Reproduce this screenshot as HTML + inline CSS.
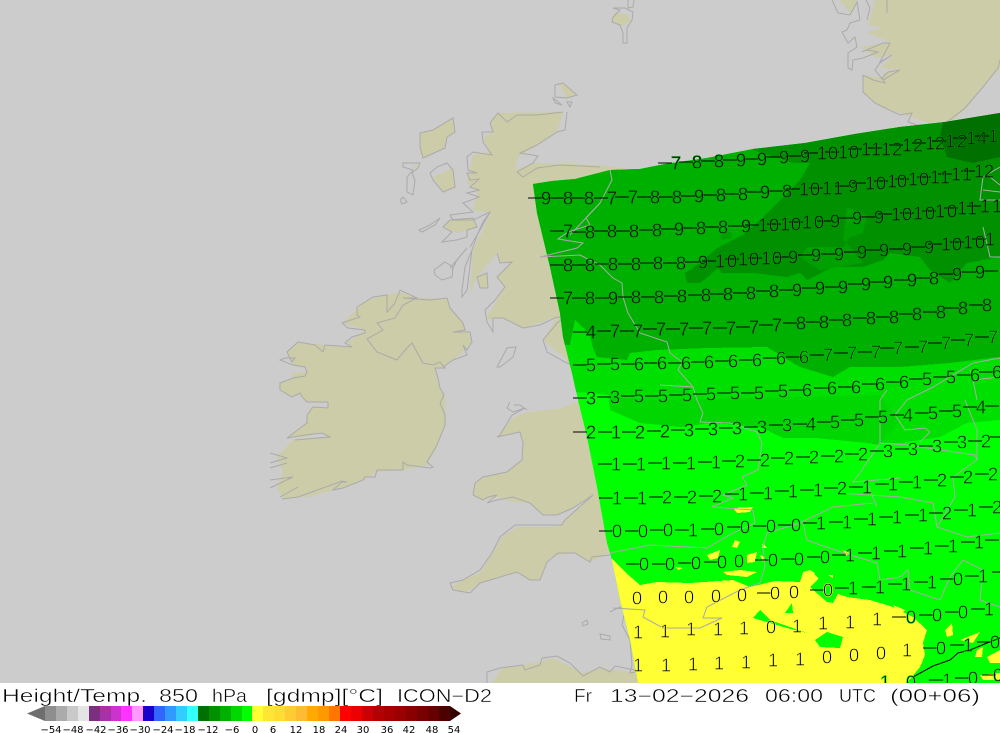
<!DOCTYPE html>
<html><head><meta charset="utf-8"><title>Height/Temp. 850 hPa ICON-D2</title>
<style>html,body{margin:0;padding:0;background:#fff;width:1000px;height:733px;overflow:hidden}svg{display:block}</style></head>
<body>
<svg xmlns="http://www.w3.org/2000/svg" width="1000" height="733" viewBox="0 0 1000 733">
<defs>
<clipPath id="map"><rect x="0" y="0" width="1000" height="683"/></clipPath>
<clipPath id="model"><polygon points="533,184 552,181 575,179 610,170 640,169 665,164 707,158 753,149 805,143 855,134 900,127 945,122 1000,113 1000,683 638,683 630,640 620,600 612,560 607,543 597,487 587,437 578,400 572,373 563,337 560,313 550,267 537,213"/></clipPath>
</defs>
<g clip-path="url(#map)">
<rect width="1000" height="683" fill="#cccccc"/>
<!-- land fill -->
<g fill="#cdcca8" shape-rendering="crispEdges">
<polygon points="497,113 563,112 558,130 537,145 518,157 515,170 533,163 600,165 640,170 640,400 572,373 567,360 543,340 557,317 523,328 503,318 485,320 505,287 497,277 512,262 500,263 497,253 477,277 470,293 473,250 483,230 490,213 473,210 478,190 467,183 473,155 490,152 483,138 493,132 490,123"/>
<polygon points="513,418 527,412 563,408 580,400 640,400 640,553 610,553 590,562 573,553 550,557 540,580 530,580 517,572 480,583 467,592 450,588 463,580 480,573 493,553 502,537 517,527 557,527 565,520 593,495 573,508 557,515 543,515 530,503 513,502 497,497 483,500 473,495 475,483 483,477 507,472 522,460 523,443 520,432 497,437"/>
<polygon points="367,300 400,292 417,298 447,298 450,308 463,323 472,342 463,352 453,360 443,367 435,370 440,388 445,397 446,423 437,447 427,465 403,470 377,472 363,480 343,488 307,497 283,498 277,487 283,473 277,457 293,440 320,438 328,437 320,432 305,437 287,438 307,423 307,413 313,407 328,408 328,402 307,402 300,395 292,397 280,390 280,383 293,378 292,373 305,372 307,367 293,365 287,352 298,342 325,345 352,347 347,343 365,330 342,323"/>
<polygon points="840,0 1000,0 1000,68 983,87 965,110 953,120 928,123 907,115 883,108 863,93 863,75 883,78 883,73 900,70 880,68 893,55 877,58 860,47 890,42 867,33 883,27 868,25 875,0 857,0 850,13"/>
<polygon points="420,133 433,130 453,118 455,132 447,137 445,148 423,158 420,147"/>
<polygon points="433,177 453,168 456,187 443,192"/>
<polygon points="443,227 450,220 473,218 477,227 467,230 457,233"/>
<polygon points="477,277 487,273 488,288 480,288"/>
<polygon points="560,85 563,83 577,95 567,98"/>
<polygon points="615,12 628,15 631,22 622,26 613,22"/>
<polygon points="412,168 420,163 418,168"/>
<polygon points="492,683 503,667 523,665 540,662 553,658 583,673 600,668 637,673 645,683"/>
</g>
<!-- coast on sea -->
<g fill="none" stroke="#aaaaaa" stroke-width="1">
<path d="M567,112L565,130L557,132L537,145L520,153L538,156L533,163L517,172L523,177L537,168L560,165L600,167"/>
<path d="M563,112L537,115L517,115L507,122L498,113L490,123L493,132L482,132L483,142L492,155L473,152L467,157L468,170L477,173L467,173L470,180L479,179L470,187L479,190L467,193L479,197L463,203L473,212L450,215L453,220L473,220L490,212L480,230L470,247"/>
<path d="M490,212L483,222L478,233L472,250L467,290L462,297L462,290L465,267L472,250"/>
<path d="M497,253L500,263L512,262L497,277L505,287L495,300L485,310L487,322L493,332L493,318L503,318L523,328L540,325L557,317L565,318L558,322L543,340L547,352L565,362L572,365"/>
<path d="M430,173L437,167L447,163L453,170L455,187L443,192L433,180Z"/>
<path d="M420,133L433,130L453,118L455,132L447,137L445,148L423,158L420,147Z"/>
<path d="M403,163L420,163L418,168L412,173L415,180L413,195L407,192L407,177L413,170L403,167Z"/>
<path d="M400,200L403,197L407,202L402,204Z"/>
<path d="M443,227L450,220L473,218L477,227L467,230L467,237L457,240L442,242L447,237L452,232Z"/>
<path d="M419,230L430,225L440,218L435,225L422,232Z"/>
<path d="M434,270L445,262L453,267L452,277L442,280L435,275Z"/>
<path d="M450,268L467,248L457,260L452,270"/>
<path d="M477,277L487,273L488,288L480,288Z"/>
<path d="M555,85L563,83L577,95L567,98L555,97Z"/>
<path d="M553,98L562,105L555,103Z"/>
<path d="M567,102L572,102L570,107Z"/>
<path d="M497,367L507,348L516,347L513,357L500,367Z"/>
<path d="M613,8L625,8L633,12L632,20L627,28L627,43L623,43L623,33L620,25L612,22L613,17L620,10Z"/>
<path d="M628,0L628,8L633,7L634,0"/>
<path d="M832,0L838,13L850,15L857,2L860,20L850,23L847,30L842,32L848,43L855,37L857,47L848,53L848,68L852,70L853,60L863,58L878,52L867,50L862,52L883,43L890,43L880,62L892,55L880,63L875,70L883,80L900,70L888,72L882,78L885,83L873,80L863,75L863,92L875,103L885,108L900,115L912,113L908,122L923,127L947,122L965,108L983,87L998,68L1000,60"/>
<path d="M866,0L870,8L867,20"/><path d="M887,0L887,13"/>
<!-- Ireland -->
<path d="M357,307L373,297L387,295L387,312L395,303L400,290L417,298L403,305L395,318L377,323L383,330L367,339L377,352L397,360L405,350L412,343L423,363L433,365L440,362L445,368L435,368L438,378L440,388L444,395L440,403L445,415L445,425L437,445L427,462L433,467L430,468L407,465L403,462L403,470L377,470L375,477L365,477L363,480L343,488L333,490L342,482L347,482L342,481L298,497L282,499"/>
<path d="M417,298L403,298L430,300L447,298L450,308L463,323L465,330L453,332L470,332L472,342L467,350L463,345L467,355L453,360L443,367"/>
<path d="M357,307L357,315L360,317L342,323L348,328L365,330L365,333L352,337L345,343L352,347L325,345L323,352L315,345L298,342L287,352L292,362L295,358L285,358L280,360L293,365L305,367L307,372L305,376L293,378L280,383L280,390L292,397L300,393L303,398L307,402L328,402L328,408L313,407L307,415L307,423L287,438L305,435L322,433L330,437L318,438L295,440"/>
<path d="M270,453L287,458L270,463M270,468L287,463M270,480L293,477L270,488M280,497L298,487"/>
<!-- Wales / England SW -->
<path d="M510,402L507,408L513,412L525,408L512,415L500,435L497,437L520,432L523,443L522,460L507,472L483,477L475,483L473,495L483,500L488,497L497,495L487,503L497,500L513,497L530,503L543,515L557,515L573,508L593,495L565,520L562,525L515,525L500,537L492,553L480,570L463,580L450,583L453,590L470,593L480,583L517,572L530,580L540,580L547,562L558,553L575,553L590,562L592,557L610,555"/>
<path d="M514,405L520,405L527,410"/>
<path d="M610,612L620,607L635,610"/><path d="M625,610L622,625L630,640L632,665L630,673L635,672"/>
<path d="M582,623L587,620L588,624L583,626Z"/><path d="M600,634L610,636L610,640L601,639Z"/>
<path d="M487,683L487,672L500,668L523,665L525,670L540,665L542,658L557,656L570,663L583,676L600,667L610,672L615,666L635,670"/>
</g>
<!-- model field -->
<g clip-path="url(#model)" shape-rendering="crispEdges">
<rect x="500" y="100" width="500" height="590" fill="#00ff00"/>
<polygon fill="#ffff33" points="600,550 612,559 625,572 640,585 657,582 690,583 733,580 750,587 775,581 800,582 803,572 810,570 818,578 827,590 847,597 870,600 893,607 913,617 927,630 923,643 925,655 920,667 907,683 600,690"/>
<g fill="#ffff33">
<polygon points="733,508 753,507 750,512 737,513"/>
<polygon points="707,555 720,550 718,558 710,560"/>
<polygon points="735,540 740,542 737,548 732,547"/>
<polygon points="747,555 757,552 755,562 747,563"/>
<polygon points="723,572 740,570 757,572 747,577 727,575"/>
<polygon points="760,555 765,557 763,562"/>
<polygon points="763,543 767,548 762,548"/>
<polygon points="675,567 683,568 678,570"/>
<polygon points="810,570 815,573 812,577"/>
<polygon points="828,575 833,575 833,578"/>
<polygon points="893,605 905,610 900,615"/>
<polygon points="945,630 952,623 953,635 947,637"/>
<polygon points="960,640 980,632 973,643"/>
<polygon points="977,650 983,647 982,657 975,657"/>
<polygon points="987,657 1000,650 1000,663 990,663"/>
<polygon points="980,675 1000,673 1000,680 983,680"/>
<polygon points="843,550 850,553 846,556"/>
</g>
<g fill="#00ff00">
<polygon points="753,618 760,610 770,620 807,633 787,628 770,623"/>
<polygon points="785,613 792,603 793,613"/>
<polygon points="815,640 827,632 843,637 840,648 820,647"/>
<polygon points="810,587 820,577 840,590 833,603 827,602"/>
</g>
<polygon fill="#00e000" points="500,100 1000,100 1000,420 967,423 940,437 900,443 867,443 816,438 783,438 760,427 713,423 680,427 640,423 610,410 608,395 590,393 573,392 500,392"/>
<polygon fill="#00d600" points="610,397 650,400 750,398 880,395 900,420 880,445 867,443 816,438 783,438 760,427 713,423 680,427 640,423 610,410"/>
<polygon fill="#00b000" points="500,100 1000,100 1000,357 950,363 900,367 850,367 833,377 800,367 793,363 777,353 767,347 707,348 657,350 630,353 627,360 597,357 593,348 590,335 575,320 570,345 500,345"/>
<polygon fill="#009000" points="753,150 793,163 810,163 800,180 773,207 760,220 743,235 717,248 700,263 685,273 687,283 700,283 713,273 753,273 787,277 800,273 807,280 833,267 863,267 883,260 890,253 920,257 930,270 950,283 967,263 1000,257 1000,100 753,100"/>
<polygon fill="#00a000" points="847,207 867,215 863,233 850,237 843,247 807,247 800,257 820,270 863,263 850,247 843,240"/>
<polygon fill="#00a000" points="720,235 730,231 732,238 722,240"/>
<polygon fill="#00b000" points="710,275 718,268 725,278 714,283"/>
<polygon fill="#007000" points="940,137 947,157 973,163 1000,157 1000,100 947,100"/>
</g>
<!-- borders on model -->
<g fill="none" stroke="#aaaaaa" stroke-width="1">
<path d="M610,170L612,180L600,203L586,218L590,225L568,232L558,239L583,243L577,248L540,257L580,255L600,265L613,278L622,283L623,297L628,313L640,333L667,342L670,353L682,362L678,370L693,387L660,385"/>
<path d="M693,387L697,400L703,413L700,422L730,423L757,432L762,443L758,470L742,477L747,485L723,495L733,498L712,507L753,510L755,523L733,533L707,548L650,545L610,553"/>
<path d="M873,503L833,507L800,523L767,533L763,547L765,567L760,583L740,590L707,607L703,618L722,618L700,628L663,628L643,617L645,610L613,608"/>
<path d="M803,523L807,540L820,545L857,557L877,563L880,580L900,577L908,570L910,590L940,600L950,577L963,560L983,570L980,600L1000,607"/>
<path d="M867,483L877,507M838,493L900,497L933,503L937,527L967,537L1000,533"/>
<path d="M880,400L880,443L860,473L853,482L900,478M880,443L907,445L975,455L977,460L953,477L955,497L937,527"/>
<path d="M907,400L895,415L905,430L925,428L930,432L920,442M880,400L887,390M965,400L977,430L977,460"/>
<path d="M907,400L933,387L973,363L1000,358M970,370L973,380L1000,377M973,380L977,400"/>
<path d="M1000,167L983,177L980,200L1000,200M983,190L1000,192M990,177L1000,185M983,227L990,257L1000,257"/>
<path d="M600,203L570,235"/>
</g>
<path d="M913,677L933,666L950,660L958,653L970,650L987,643L1000,638" fill="none" stroke="#000" stroke-width="1"/>
<!-- contour labels -->
<path fill="none" stroke="#000" stroke-width="1" shape-rendering="crispEdges" d="M658 163h14M679 162h14M701 161h14M723 160h14M744 159h14M766 157h14M787 156h14M804 153h14M825 152h14M848 149h14M868 148h14M889 145h14M912 143h14M932 141h14M953 138h14M975 136h14
M528 198h14M550 198h14M571 198h14M594 198h14M615 197h14M637 197h14M659 197h14M681 196h14M703 195h14M725 194h14M747 192h14M769 191h14M786 189h14M809 188h14M835 186h14M852 183h14M874 181h14M895 179h14M917 177h14M938 174h14M961 171h14
M550 231h14M572 232h14M594 231h14M616 231h14M639 230h14M661 229h14M683 228h14M705 227h14M728 226h14M745 225h14M767 224h14M789 222h14M817 221h14M839 218h14M861 217h14M878 214h14M900 213h14M922 211h14M944 208h14M967 206h14
M550 265h14M572 265h14M595 264h14M618 264h14M640 263h14M663 263h14M685 262h14M702 261h14M725 259h14M748 258h14M775 257h14M798 255h14M821 254h14M844 252h14M866 250h14M889 249h14M911 247h14M928 244h14M950 242h14M972 239h14
M550 298h14M572 298h14M595 298h14M618 297h14M641 297h14M664 296h14M688 295h14M710 294h14M733 293h14M756 291h14M779 290h14M802 288h14M825 287h14M848 284h14M870 282h14M894 280h14M916 278h14M939 274h14M962 272h14M984 271h14
M573 332h14M597 331h14M620 331h14M643 329h14M666 329h14M689 328h14M713 328h14M736 327h14M759 325h14M783 323h14M806 322h14M829 320h14M853 318h14M876 317h14M899 314h14M923 312h14M945 308h14M969 305h14
M573 365h14M597 364h14M621 364h14M644 363h14M668 363h14M691 362h14M715 361h14M739 360h14M763 358h14M786 357h14M810 355h14M834 353h14M858 352h14M880 348h14M905 347h14M928 343h14M951 340h14M975 337h14
M573 398h14M597 397h14M621 396h14M645 396h14M669 395h14M693 394h14M717 393h14M741 393h14M765 391h14M789 390h14M814 388h14M838 387h14M862 384h14M886 382h14M909 379h14M933 377h14M957 375h14M979 372h14
M573 432h14M598 432h14M622 432h14M647 431h14M671 430h14M695 429h14M719 428h14M744 427h14M769 425h14M793 424h14M817 422h14M841 420h14M865 417h14M890 415h14M915 413h14M939 411h14M963 407h14M985 406h14
M598 464h14M623 464h14M648 463h14M673 463h14M698 462h14M722 461h14M747 460h14M771 458h14M796 457h14M821 456h14M845 454h14M870 451h14M895 449h14M919 446h14M944 442h14M968 441h14M988 437h12
M599 498h14M624 498h14M649 497h14M674 497h14M699 496h14M725 494h14M750 493h14M775 491h14M800 490h14M824 488h14M849 487h14M875 484h14M899 482h14M924 480h14M950 477h14M975 474h14
M599 531h14M625 531h14M650 530h14M675 530h14M701 529h14M727 527h14M753 526h14M778 525h14M803 523h14M829 522h14M854 519h14M879 517h14M905 515h14M929 513h14M954 510h14M979 507h14
M626 564h14M652 564h14M678 563h14M704 562h14M755 560h14M781 559h14M807 557h14M832 555h14M858 553h14M884 551h14M910 548h14M935 546h14M961 542h14M985 540h14
M757 593h14M810 590h14M835 588h14M862 587h14M888 584h14M914 582h14M940 579h14M965 576h14M992 572h8
M892 617h14M919 615h14M945 612h14M971 609h14M923 648h14M950 645h14M977 642h14M929 680h14M955 678h14M982 675h14"/>
<g transform="translate(0,6.7)" font-family="'Liberation Sans',sans-serif" font-size="18.5" fill="#000" text-anchor="middle" stroke-width=".55">
<g stroke="#00a000">
<text x="676 697 719 741 762 784 805 822 833 843 854 866 876 886 897 907 918 930 940 950 962 971 982 993" y="163 162 161 160 159 157 156 153 153 152 152 149 149 149 149 145 145 143 143 141 141 138 138 136">788999910101112121212141</text>
<text x="546 568 589 612 633 655 677 699 721 743 765 787 804 815 827 838 853 870 881 892 902 913 924 935 945 956 967 979 989" y="198 198 198 198 197 197 197 196 195 194 192 191 189 189 188 188 186 183 183 181 181 179 179 177 177 174 174 171 171">98877889889810119101010111112</text>
<text x="568 590 612 634 657 679 701 723 746 763 774 785 796 807 819 835 857 879 896 907 918 930 940 952 962 972 985 997" y="231 232 231 231 230 229 228 227 226 225 225 224 224 222 222 221 218 217 214 214 213 213 211 211 208 208 206 206">7888898891010109991010101111</text>
<text x="568 590 613 636 658 681 703 720 732 743 754 766 777 793 816 839 862 884 907 929 946 957 968 980 990" y="265 265 264 264 263 263 262 261 261 259 259 258 258 257 255 254 252 250 249 247 244 244 242 242 239">8888889101010999999910101</text>
<text x="568 590 613 636 659 682 706 728 751 774 797 820 843 866 888 912 934 957 980" y="298 298 298 297 297 296 295 294 293 291 290 288 287 284 282 280 278 274 272">7898888888999999899</text>
<text x="591 615 638 661 684 707 731 754 777 801 824 847 871 894 917 941 963 987" y="332 331 331 329 329 328 328 327 325 323 322 320 318 317 314 312 308 305">477777777888888888</text>
</g>
<g stroke="#00dc00">
<text x="591 615 639 662 686 709 733 757 781 804 828 852 876 898 923 946 969 993" y="365 364 364 363 363 362 361 360 358 357 355 353 352 348 347 343 340 337">556666666677777777</text>
<text x="591 615 639 663 687 711 735 759 783 807 832 856 880 904 927 951 975 997" y="398 397 396 396 395 394 393 393 391 390 388 387 384 382 379 377 375 372">335555555666665566</text>
<text x="591 616 640 665 689 713 737 762 787 811 835 859 883 908 933 957 981" y="432 432 432 431 430 429 428 427 425 424 422 420 417 415 413 411 407">21223333345554554</text>
</g>
<g stroke="#00ff00">
<text x="616 641 666 691 716 740 765 789 814 839 863 888 913 937 962 986" y="464 464 463 463 462 461 460 458 457 456 454 451 449 446 442 441">1111122222233332</text>
<text x="617 642 667 692 717 743 768 793 818 842 867 893 917 942 968 993" y="498 498 497 497 496 494 493 491 490 488 487 484 482 480 477 474">1122211112111222</text>
<text x="617 643 668 693 719 745 771 796 821 847 872 897 923 947 972 997" y="531 531 530 530 529 527 526 525 523 522 519 517 515 513 510 507">0001000011111212</text>
<text x="644 670 696 722 739 773 799 825 850 876 902 928 953 979" y="564 564 563 562 561 560 559 557 555 553 551 548 546 542">00000000111111</text>
</g>
<g stroke="#ffff33">
<text x="637 663 689 716 742 775 794 828" y="598 597 597 596 595 593 592 590">00000000</text>
<text x="638 665 691 718 744 771 797 823 850 877" y="632 631 629 629 628 627 626 623 622 619">1111101111</text>
<text x="638 666 693 719 746 773 800 827 854 881 907" y="665 665 664 663 662 660 659 657 655 653 650">11111110001</text>
</g>
<g stroke="#00ff00">
<text x="853 880 906 932 958 983" y="588 587 584 582 579 576">111101</text>
<text x="911 937 963 989" y="617 615 612 609">0001</text>
<text x="941 968 995" y="648 645 642">010</text>
<text x="885 911 947 973 998" y="682 682 680 678 675">10100</text>
</g>
</g>
</g>
<!-- bottom strip -->
<rect y="683" width="1000" height="50" fill="#fff"/>
<g font-family="'Liberation Sans',sans-serif" font-size="18" fill="#000" stroke="#fff" stroke-width=".45">
<text x="2" y="702" textLength="145" lengthAdjust="spacingAndGlyphs">Height/Temp.</text>
<text x="159" y="702" textLength="39" lengthAdjust="spacingAndGlyphs">850</text>
<text x="212" y="702" textLength="35" lengthAdjust="spacingAndGlyphs">hPa</text>
<text x="266" y="702" textLength="117" lengthAdjust="spacingAndGlyphs">[gdmp][°C]</text>
<text x="397" y="702" textLength="95" lengthAdjust="spacingAndGlyphs">ICON−D2</text>
<text x="574" y="702" textLength="18" lengthAdjust="spacingAndGlyphs">Fr</text>
<text x="610" y="702" textLength="139" lengthAdjust="spacingAndGlyphs">13−02−2026</text>
<text x="765" y="702" textLength="58" lengthAdjust="spacingAndGlyphs">06:00</text>
<text x="839" y="702" textLength="37" lengthAdjust="spacingAndGlyphs">UTC</text>
<text x="890" y="702" textLength="90" lengthAdjust="spacingAndGlyphs">(00+06)</text>
</g>
<!-- legend -->
<g shape-rendering="crispEdges">
<polygon points="27,713.5 45,706 45,721" fill="#6e6e6e" shape-rendering="auto"/>
<rect x="45" y="706" width="11" height="15" fill="#8e8e8e"/>
<rect x="56" y="706" width="11" height="15" fill="#ababab"/>
<rect x="67" y="706" width="11" height="15" fill="#c9c9c9"/>
<rect x="78" y="706" width="11" height="15" fill="#e4e4e4"/>
<rect x="89" y="706" width="11" height="15" fill="#7b2f7f"/>
<rect x="100" y="706" width="11" height="15" fill="#a830a8"/>
<rect x="111" y="706" width="10" height="15" fill="#cc33cc"/>
<rect x="121" y="706" width="11" height="15" fill="#ff33ff"/>
<rect x="132" y="706" width="11" height="15" fill="#ff99ff"/>
<rect x="143" y="706" width="11" height="15" fill="#1a00cc"/>
<rect x="154" y="706" width="11" height="15" fill="#3366ff"/>
<rect x="165" y="706" width="11" height="15" fill="#3399ff"/>
<rect x="176" y="706" width="11" height="15" fill="#33ccff"/>
<rect x="187" y="706" width="11" height="15" fill="#33ffff"/>
<rect x="198" y="706" width="11" height="15" fill="#007000"/>
<rect x="209" y="706" width="11" height="15" fill="#009000"/>
<rect x="220" y="706" width="11" height="15" fill="#00b000"/>
<rect x="231" y="706" width="11" height="15" fill="#00d800"/>
<rect x="242" y="706" width="10" height="15" fill="#00ff00"/>
<rect x="252" y="706" width="11" height="15" fill="#ffff33"/>
<rect x="263" y="706" width="11" height="15" fill="#ffe633"/>
<rect x="274" y="706" width="11" height="15" fill="#ffdd33"/>
<rect x="285" y="706" width="11" height="15" fill="#ffcc33"/>
<rect x="296" y="706" width="11" height="15" fill="#ffbb33"/>
<rect x="307" y="706" width="11" height="15" fill="#ffaa00"/>
<rect x="318" y="706" width="11" height="15" fill="#ff9900"/>
<rect x="329" y="706" width="11" height="15" fill="#ff7700"/>
<rect x="340" y="706" width="11" height="15" fill="#ff0000"/>
<rect x="351" y="706" width="11" height="15" fill="#ee0000"/>
<rect x="362" y="706" width="11" height="15" fill="#cc0000"/>
<rect x="373" y="706" width="11" height="15" fill="#b30000"/>
<rect x="384" y="706" width="11" height="15" fill="#a60000"/>
<rect x="395" y="706" width="11" height="15" fill="#990000"/>
<rect x="406" y="706" width="11" height="15" fill="#880000"/>
<rect x="417" y="706" width="11" height="15" fill="#770000"/>
<rect x="428" y="706" width="11" height="15" fill="#660000"/>
<rect x="439" y="706" width="11" height="15" fill="#4d0000"/>
<polygon points="450,706 461,713.5 450,721" fill="#330000" shape-rendering="auto"/>
</g>
<g font-family="'DejaVu Sans',sans-serif" font-size="10" fill="#000" text-anchor="middle">
<text x="51" y="733">−54</text><text x="73" y="733">−48</text><text x="96" y="733">−42</text><text x="118" y="733">−36</text><text x="140" y="733">−30</text><text x="163" y="733">−24</text><text x="185" y="733">−18</text><text x="208" y="733">−12</text><text x="232" y="733">−6</text><text x="255" y="733">0</text><text x="273" y="733">6</text><text x="296" y="733">12</text><text x="319" y="733">18</text><text x="341" y="733">24</text><text x="363" y="733">30</text><text x="387" y="733">36</text><text x="409" y="733">42</text><text x="432" y="733">48</text><text x="454" y="733">54</text>
</g>
</svg>
</body></html>
